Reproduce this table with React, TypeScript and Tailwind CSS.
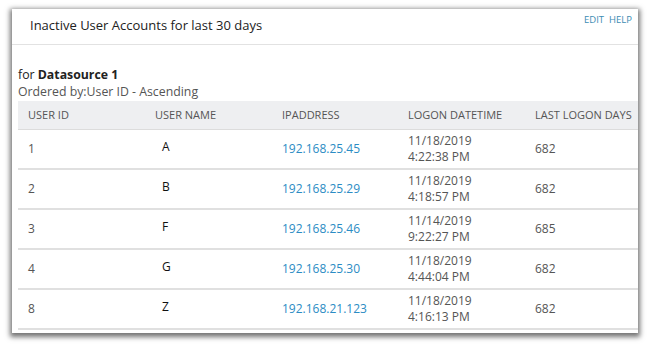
import React from "react";

const rows = [
  { id: "1", name: "A", ip: "192.168.25.45", date: "11/18/2019", time: "4:22:38 PM", days: "682" },
  { id: "2", name: "B", ip: "192.168.25.29", date: "11/18/2019", time: "4:18:57 PM", days: "682" },
  { id: "3", name: "F", ip: "192.168.25.46", date: "11/14/2019", time: "9:22:27 PM", days: "685" },
  { id: "4", name: "G", ip: "192.168.25.30", date: "11/18/2019", time: "4:44:04 PM", days: "682" },
  { id: "8", name: "Z", ip: "192.168.21.123", date: "11/18/2019", time: "4:16:13 PM", days: "682" },
];

export default function App() {
  return (
    <div className="w-[650px] h-[345px] bg-white pt-[9px] pl-[12px]" style={{ fontFamily: "'Open Sans', sans-serif" }}>
      <div className="w-[626px] h-[324px] bg-white shadow-[0_2px_5px_2px_rgba(0,0,0,0.55)] flex flex-col overflow-hidden">
        <div className="h-[36px] border-b border-[#e2e2e2] flex items-start justify-between pl-[18px] pr-[6px]">
          <div className="text-[13px] text-[#222] mt-[7px]">Inactive User Accounts for last 30 days</div>
          <div className="flex gap-[5px] text-[9.5px] text-[#3b8db3] mt-[4px]">
            <span>EDIT</span>
            <span>HELP</span>
          </div>
        </div>
        <div className="pl-[6px] pt-[21px]">
          <div className="text-[12.3px] text-[#222] leading-[17px]">
            for <span className="font-bold">Datasource 1</span>
          </div>
          <div className="text-[12.3px] text-[#555] leading-[17px]">Ordered by:User ID - Ascending</div>
          <div className="grid grid-cols-[127px_127px_126px_127px_1fr] h-[29px] items-center bg-[#eeeff1] border-b border-[#dcdcdc] text-[11px] text-[#555] mt-[1px]">
            <div className="pl-[10px]">USER ID</div>
            <div className="pl-[10px]">USER NAME</div>
            <div className="pl-[10px]">IPADDRESS</div>
            <div className="pl-[10px]">LOGON DATETIME</div>
            <div className="pl-[10px]">LAST LOGON DAYS</div>
          </div>
          {rows.map((r) => (
            <div
              key={r.id}
              className="grid grid-cols-[127px_127px_126px_127px_1fr] h-[40px] items-center border-b-2 border-[#e0e0e0] text-[12px] text-[#555]"
            >
              <div className="pl-[10px]">{r.id}</div>
              <div className="pl-[17px] text-[#111] -mt-[5px]">{r.name}</div>
              <div className="pl-[10px] text-[#2b8cc4]">{r.ip}</div>
              <div className="pl-[10px] leading-[16px]">
                <div>{r.date}</div>
                <div>{r.time}</div>
              </div>
              <div className="pl-[10px]">{r.days}</div>
            </div>
          ))}
        </div>
      </div>
    </div>
  );
}
